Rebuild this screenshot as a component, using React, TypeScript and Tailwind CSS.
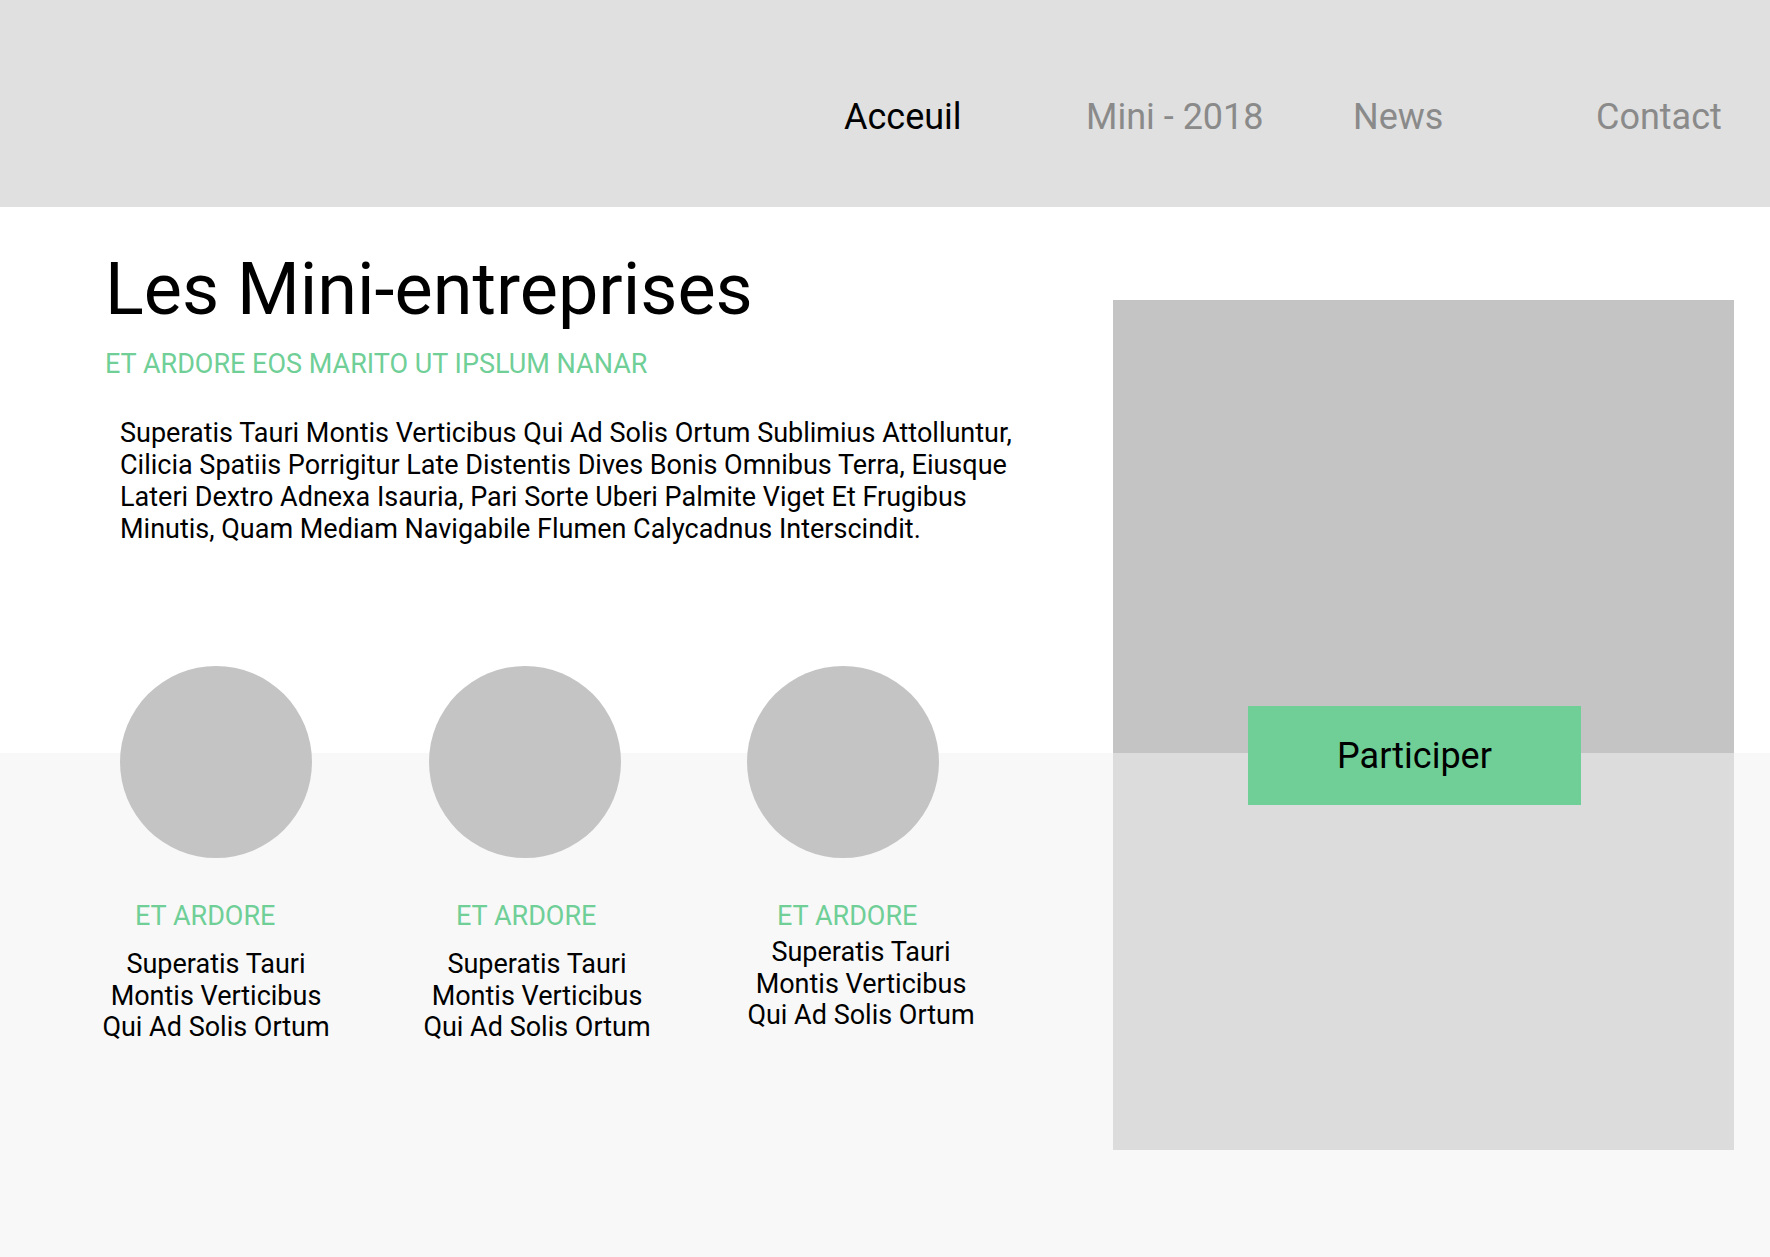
const columns = [
  { wrap: "w-[309px]", label: "ml-[55px]", text: "ml-[16px] mt-[19px]" },
  { wrap: "w-[318px]", label: "ml-[67px]", text: "ml-[28px] mt-[19px]" },
  { wrap: "w-[300px]", label: "ml-[70px]", text: "ml-[34px] mt-[7px]" },
];

function Column({ wrap, label, text }: { wrap: string; label: string; text: string }) {
  return (
    <div className={wrap}>
      <div className="ml-[40px] h-[192px] w-[192px] rounded-full bg-[#c4c4c4]" />
      <div className={`${label} mt-[45px] text-[27px] leading-[27px] text-[#6fcf97]`}>ET ARDORE</div>
      <div className={`${text} w-[240px] text-center text-[27px] leading-[31.6px]`}>
        Superatis Tauri
        <br />
        Montis Verticibus
        <br />
        Qui Ad Solis Ortum
      </div>
    </div>
  );
}

export default function App() {
  return (
    <div className="min-h-[1257px] w-full bg-[#f8f8f8] font-['Roboto',sans-serif] text-black">
      <header className="h-[207px] bg-[#e0e0e0]">
        <nav className="flex pl-[844px] pt-[99px] text-[36px] leading-[36px] text-[#8a8a8a]">
          <a className="w-[242px] text-black">Acceuil</a>
          <a className="w-[267px]">Mini - 2018</a>
          <a className="w-[243px]">News</a>
          <a>Contact</a>
        </nav>
      </header>

      <main className="flex h-[1050px] bg-[linear-gradient(to_bottom,#ffffff_546px,#f8f8f8_546px)]">
        <section className="w-[1113px]">
          <h1 className="ml-[105px] mt-[47px] text-[72px] font-normal leading-[72px]">Les Mini-entreprises</h1>
          <p className="ml-[105px] mt-[25px] text-[27px] leading-[27px] text-[#6fcf97]">
            ET ARDORE EOS MARITO UT IPSLUM NANAR
          </p>
          <p className="ml-[120px] mt-[39px] whitespace-nowrap text-[27px] leading-[32px]">
            Superatis Tauri Montis Verticibus Qui Ad Solis Ortum Sublimius Attolluntur,
            <br />
            Cilicia Spatiis Porrigitur Late Distentis Dives Bonis Omnibus Terra, Eiusque
            <br />
            Lateri Dextro Adnexa Isauria, Pari Sorte Uberi Palmite Viget Et Frugibus
            <br />
            Minutis, Quam Mediam Navigabile Flumen Calycadnus Interscindit.
          </p>
          <div className="mt-[121px] flex pl-[80px]">
            {columns.map((c, i) => (
              <Column key={i} {...c} />
            ))}
          </div>
        </section>

        <aside className="relative mt-[93px] flex h-[850px] w-[621px] flex-col">
          <div className="h-[453px] bg-[#c4c4c4]" />
          <div className="flex-1 bg-[#dcdcdc]" />
          <button className="absolute left-[135px] top-[406px] h-[99px] w-[333px] bg-[#6fcf97] text-[36px] text-black">
            Participer
          </button>
        </aside>
      </main>
    </div>
  );
}
